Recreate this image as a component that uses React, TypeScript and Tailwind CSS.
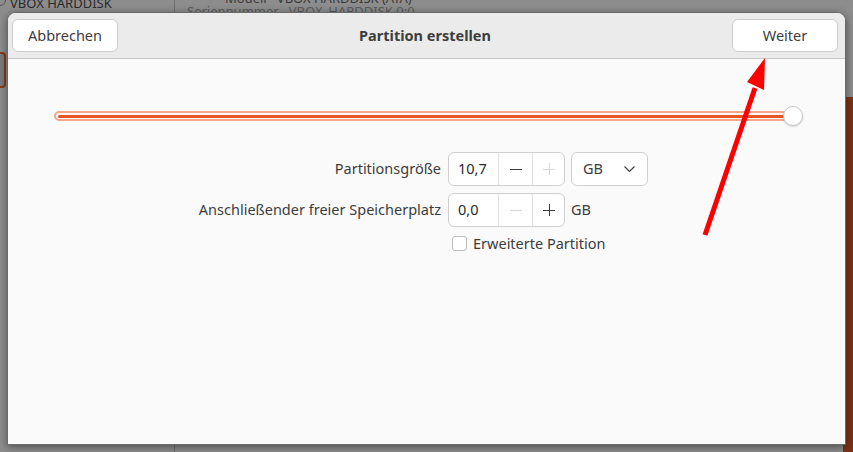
import React from "react";

export default function App() {
  const font = { fontFamily: '"Noto Sans", "Open Sans", sans-serif' };
  return (
    <div className="relative w-[853px] h-[452px] overflow-hidden bg-[#8d8d8d]" style={font}>
      {/* background app */}
      <div className="absolute inset-0 flex">
        <div className="w-[175px] h-full border-r border-[#6e6e6e] relative">
          <div className="absolute left-[10px] top-[-4px] text-[13px] leading-[14px] text-[#2a2a2a]">VBOX HARDDISK</div>
          <div className="absolute left-[-6px] top-[-6px] w-[12px] h-[12px] rounded-full border border-[#555]" />
          <div className="absolute left-[-10px] top-[52px] w-[16px] h-[36px] rounded border-2 border-[#8a3a18] bg-[#7b7b7b]" />
        </div>
        <div className="flex-1 relative">
          <div className="absolute left-[50px] top-[-8px] text-[13px] leading-[12px] text-[#3a3a3a]">Modell&nbsp;&nbsp;&nbsp;VBOX HARDDISK (ATA)</div>
          <div className="absolute left-[12px] top-[5px] text-[13px] leading-[12px] text-[#5a5a5a]">Seriennummer&nbsp;&nbsp;&nbsp;VBOX_HARDDISK 0:0</div>
          <div className="absolute right-0 top-[97px] w-[10px] bottom-0 bg-[#7a3218]" />
        </div>
      </div>

      {/* dialog */}
      <div className="absolute left-[7px] top-[12px] w-[839px] h-[433px] rounded-t-[9px] overflow-hidden bg-[#fafafa] border border-[#6a6a6a] shadow-[0_2px_8px_rgba(0,0,0,0.45)] flex flex-col">
        <div className="h-[46px] bg-[#ebebeb] border-b border-[#c6c6c6] flex items-center justify-between pl-[4px] pr-[7px]">
          <button className="w-[106px] h-[33px] rounded-[6px] bg-white border border-[#cdcdcd] text-[14.5px] text-[#3d3d3d]">Abbrechen</button>
          <div className="text-[14.5px] font-bold text-[#3d3d3d]">Partition erstellen</div>
          <button className="w-[106px] h-[33px] rounded-[6px] bg-white border border-[#cdcdcd] text-[14.5px] text-[#3d3d3d]">Weiter</button>
        </div>
        <div className="flex-1 flex flex-col">
          {/* slider */}
          <div className="pl-[46px] pr-[42px] pt-[47px] flex items-center">
            <div className="flex-1 h-[10px] rounded-full border-2 border-[#f5a68b] flex items-center px-[2px]">
              <div className="flex-1 h-[3px] bg-[#e95420] rounded-full" />
            </div>
            <div className="w-[20px] h-[20px] -ml-[12px] rounded-full bg-white border border-[#c8c8c8] shadow-[0_1px_2px_rgba(0,0,0,0.15)]" />
          </div>

          {/* form */}
          <div className="mt-[26px] grid grid-cols-[433px_auto] gap-x-[7px] gap-y-[7px] items-center">
            <div className="text-right text-[14.5px] text-[#3d3d3d]">Partitionsgröße</div>
            <div className="flex items-center gap-[6px]">
              <div className="flex h-[34px] w-[117px] rounded-[6px] border border-[#cfcfcf] bg-white overflow-hidden">
                <div className="w-[49px] flex items-center pl-[9px] text-[14.5px] text-[#2a2a2a]">10,7</div>
                <div className="w-[34px] border-l border-[#e2e2e2] flex items-center justify-center text-[#3d3d3d]">
                  <svg width="12" height="12" viewBox="0 0 12 12"><path d="M0 6.5h12" stroke="currentColor" strokeWidth="1" /></svg>
                </div>
                <div className="flex-1 border-l border-[#e2e2e2] flex items-center justify-center text-[#d8d8d8]">
                  <svg width="12" height="12" viewBox="0 0 12 12"><path d="M0 6.5h12M6.5 0v12" stroke="currentColor" strokeWidth="1" /></svg>
                </div>
              </div>
              <div className="flex h-[34px] w-[77px] rounded-[6px] border border-[#cfcfcf] bg-white items-center justify-between pl-[11px] pr-[12px] text-[14.5px] text-[#3d3d3d]">
                <span>GB</span>
                <svg width="11" height="7" viewBox="0 0 11 7"><path d="M0.5 0.5l5 5 5-5" fill="none" stroke="#3d3d3d" strokeWidth="1.1" /></svg>
              </div>
            </div>

            <div className="text-right text-[14.5px] text-[#3d3d3d]">Anschließender freier Speicherplatz</div>
            <div className="flex items-center gap-[6px]">
              <div className="flex h-[34px] w-[117px] rounded-[6px] border border-[#cfcfcf] bg-white overflow-hidden">
                <div className="w-[49px] flex items-center pl-[9px] text-[14.5px] text-[#2a2a2a]">0,0</div>
                <div className="w-[34px] border-l border-[#e2e2e2] flex items-center justify-center text-[#d8d8d8]">
                  <svg width="12" height="12" viewBox="0 0 12 12"><path d="M0 6.5h12" stroke="currentColor" strokeWidth="1" /></svg>
                </div>
                <div className="flex-1 border-l border-[#e2e2e2] flex items-center justify-center text-[#3d3d3d]">
                  <svg width="12" height="12" viewBox="0 0 12 12"><path d="M0 6.5h12M6.5 0v12" stroke="currentColor" strokeWidth="1" /></svg>
                </div>
              </div>
              <span className="text-[14.5px] text-[#3d3d3d]">GB</span>
            </div>

            <div />
            <div className="flex items-center gap-[6px] pl-[4px] -mt-[1px]">
              <div className="w-[15px] h-[15px] rounded-[3px] border border-[#bdbdbd] bg-white" />
              <span className="text-[14.5px] text-[#3d3d3d]">Erweiterte Partition</span>
            </div>
          </div>
        </div>
      </div>

      {/* red arrow annotation */}
      <svg className="absolute left-0 top-0 pointer-events-none" width="853" height="452" viewBox="0 0 853 452">
        <line x1="705" y1="235" x2="755" y2="88" stroke="#ff0000" strokeWidth="5" />
        <polygon points="765,58 747,82 764,90" fill="#ff0000" />
      </svg>
    </div>
  );
}
